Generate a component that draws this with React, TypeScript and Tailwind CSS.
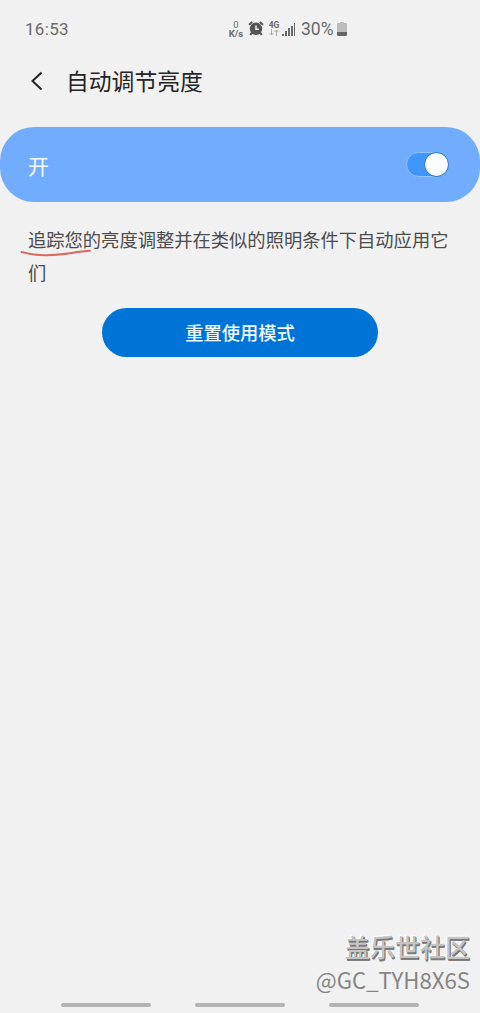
import { useState } from "react";

const StatusBar = () => {
  return (
    <div className="flex h-[58px] w-full pl-[25px] pt-[19px] font-['Roboto',sans-serif] text-[#6a6a6a]">
      <span className="w-[203px] text-[17px] leading-[21px] tracking-[0.3px]">16:53</span>
      <div className="flex h-[21px]">
        <div className="mt-[1px] flex w-[16px] flex-col items-center text-[9.500px] leading-[9px]">
          <span>0</span>
          <span className="font-bold">K/s</span>
        </div>
        <svg className="ml-[4px] mt-[2px]" width="16" height="15" viewBox="0 0 16 15">
          <circle cx="8" cy="7.800" r="6.200" fill="#555" />
          <path d="M1 3.800 4.200 1M15 3.800 11.800 1" stroke="#555" strokeWidth="2" />
          <path d="m4.300 11-2 3M11.700 11l2 3" stroke="#555" strokeWidth="2" />
          <path d="M8 4.500v3.800h3" fill="none" stroke="#f1f1f1" strokeWidth="1.500" />
        </svg>
        <div className="ml-[4px] mt-[2px] flex w-[12px] flex-col items-center text-[8.500px] font-bold leading-[8px]">
          <span>4G</span>
          <svg width="10" height="7" viewBox="0 0 10 7" fill="none" stroke="#aaa">
            <path d="M2.500 0v6M.5 4l2 2 2-2M7.500 7V1M5.500 3l2-2 2 2" />
          </svg>
        </div>
        <svg className="ml-[2px] mt-[4px]" width="14" height="13" viewBox="0 0 14 13" fill="#6a6a6a">
          <rect x="0" y="11" width="2" height="2" />
          <rect x="3" y="8" width="2" height="5" />
          <rect x="6" y="5" width="2" height="8" />
          <rect x="9" y="3" width="2" height="10" />
          <rect x="12" y="0" width="1" height="13" />
        </svg>
        <span className="ml-[5px] w-[34px] text-[17.500px] leading-[21px]">30%</span>
        <svg className="ml-[2px] mt-[3px]" width="10" height="14" viewBox="0 0 10 14">
          <path d="M3 0h4v1h2q1 0 1 1v10.500q0 1.500-1.500 1.500h-7Q0 14 0 12.500V2q0-1 1-1h2z" fill="#bcbcbc" />
          <path d="M0 10h10v2.500q0 1.500-1.500 1.500h-7Q0 14 0 12.500z" fill="#666" />
        </svg>
      </div>
    </div>
  );
};

const App = () => {
  const [enabled, setEnabled] = useState(true);

  return (
    <div className="relative flex h-[1013px] w-[480px] flex-col overflow-hidden bg-[#f1f1f1] font-['Noto_Sans_CJK_SC',sans-serif]">
      <StatusBar />

      <header className="flex h-[69px] pl-[30px]">
        <svg className="mt-[13px]" width="13" height="20" viewBox="0 0 13 20" fill="none" stroke="#252525" strokeWidth="2">
          <path d="M11.500 1.500 2.500 10l9 8.500" />
        </svg>
        <h1 className="ml-[23px] mt-[6px] text-[22.800px] leading-[34px] text-[#252525]">自动调节亮度</h1>
      </header>

      <div className="flex h-[75px] items-center justify-between rounded-[34px] bg-[#72acfe] pl-[28px] pr-[31px]">
        <span className="text-[21px] leading-[32px] text-[#f4fbff]">开</span>
        <button
          onClick={() => setEnabled(!enabled)}
          className={`flex h-[25px] w-[43px] items-center rounded-full border border-[#8fc4fb] ${
            enabled ? "justify-end bg-[#4196fc]" : "justify-start bg-[#b5b5b5]"
          }`}
        >
          <span className="-mr-px size-[25px] shrink-0 rounded-full border border-[#1c70b8] bg-[#fafcfd]" />
        </button>
      </div>

      <div className="relative pl-[28px] pt-[21px]">
        <p className="w-[424px] break-all text-[18.300px] leading-[33px] text-[#4c4c4c]">
          追踪您的亮度调整并在类似的照明条件下自动应用它们
        </p>
        <svg className="absolute left-[20px] top-[46px]" width="74" height="12" viewBox="0 0 74 12" fill="none">
          <path
            d="M1.500 4c8 2 15 3.500 25 3.200S50 5.500 57 4l13-1.300"
            stroke="#dc6861"
            strokeWidth="2"
            strokeLinecap="round"
          />
        </svg>
      </div>

      <button className="mt-[19px] h-[49px] w-[276px] self-center rounded-full bg-[#0074d6] text-[18.300px] font-medium text-[#eefbff]">
        重置使用模式
      </button>

      <div className="mt-auto flex justify-center gap-[44px] pb-[6px]">
        <span className="h-[4px] w-[90px] rounded-full bg-[#b4b4b4]" />
        <span className="h-[4px] w-[90px] rounded-full bg-[#b4b4b4]" />
        <span className="h-[4px] w-[90px] rounded-full bg-[#b4b4b4]" />
      </div>

      <div className="absolute bottom-[18px] right-[10px] flex flex-col items-end whitespace-nowrap text-[#858585]">
        <span className="text-[25px] font-medium leading-[33px] text-[#c4c4c4] [text-shadow:1px_1px_0_#777,1px_2px_0_#808080,-1px_-1px_0_#fff]">
          盖乐世社区
        </span>
        <span className="text-[22.200px] leading-[32px] [text-shadow:-1px_-1px_0_#f8f8f8,-1px_0_0_#dcdcdc]">@GC_TYH8X6S</span>
      </div>
    </div>
  );
};

export default App;
